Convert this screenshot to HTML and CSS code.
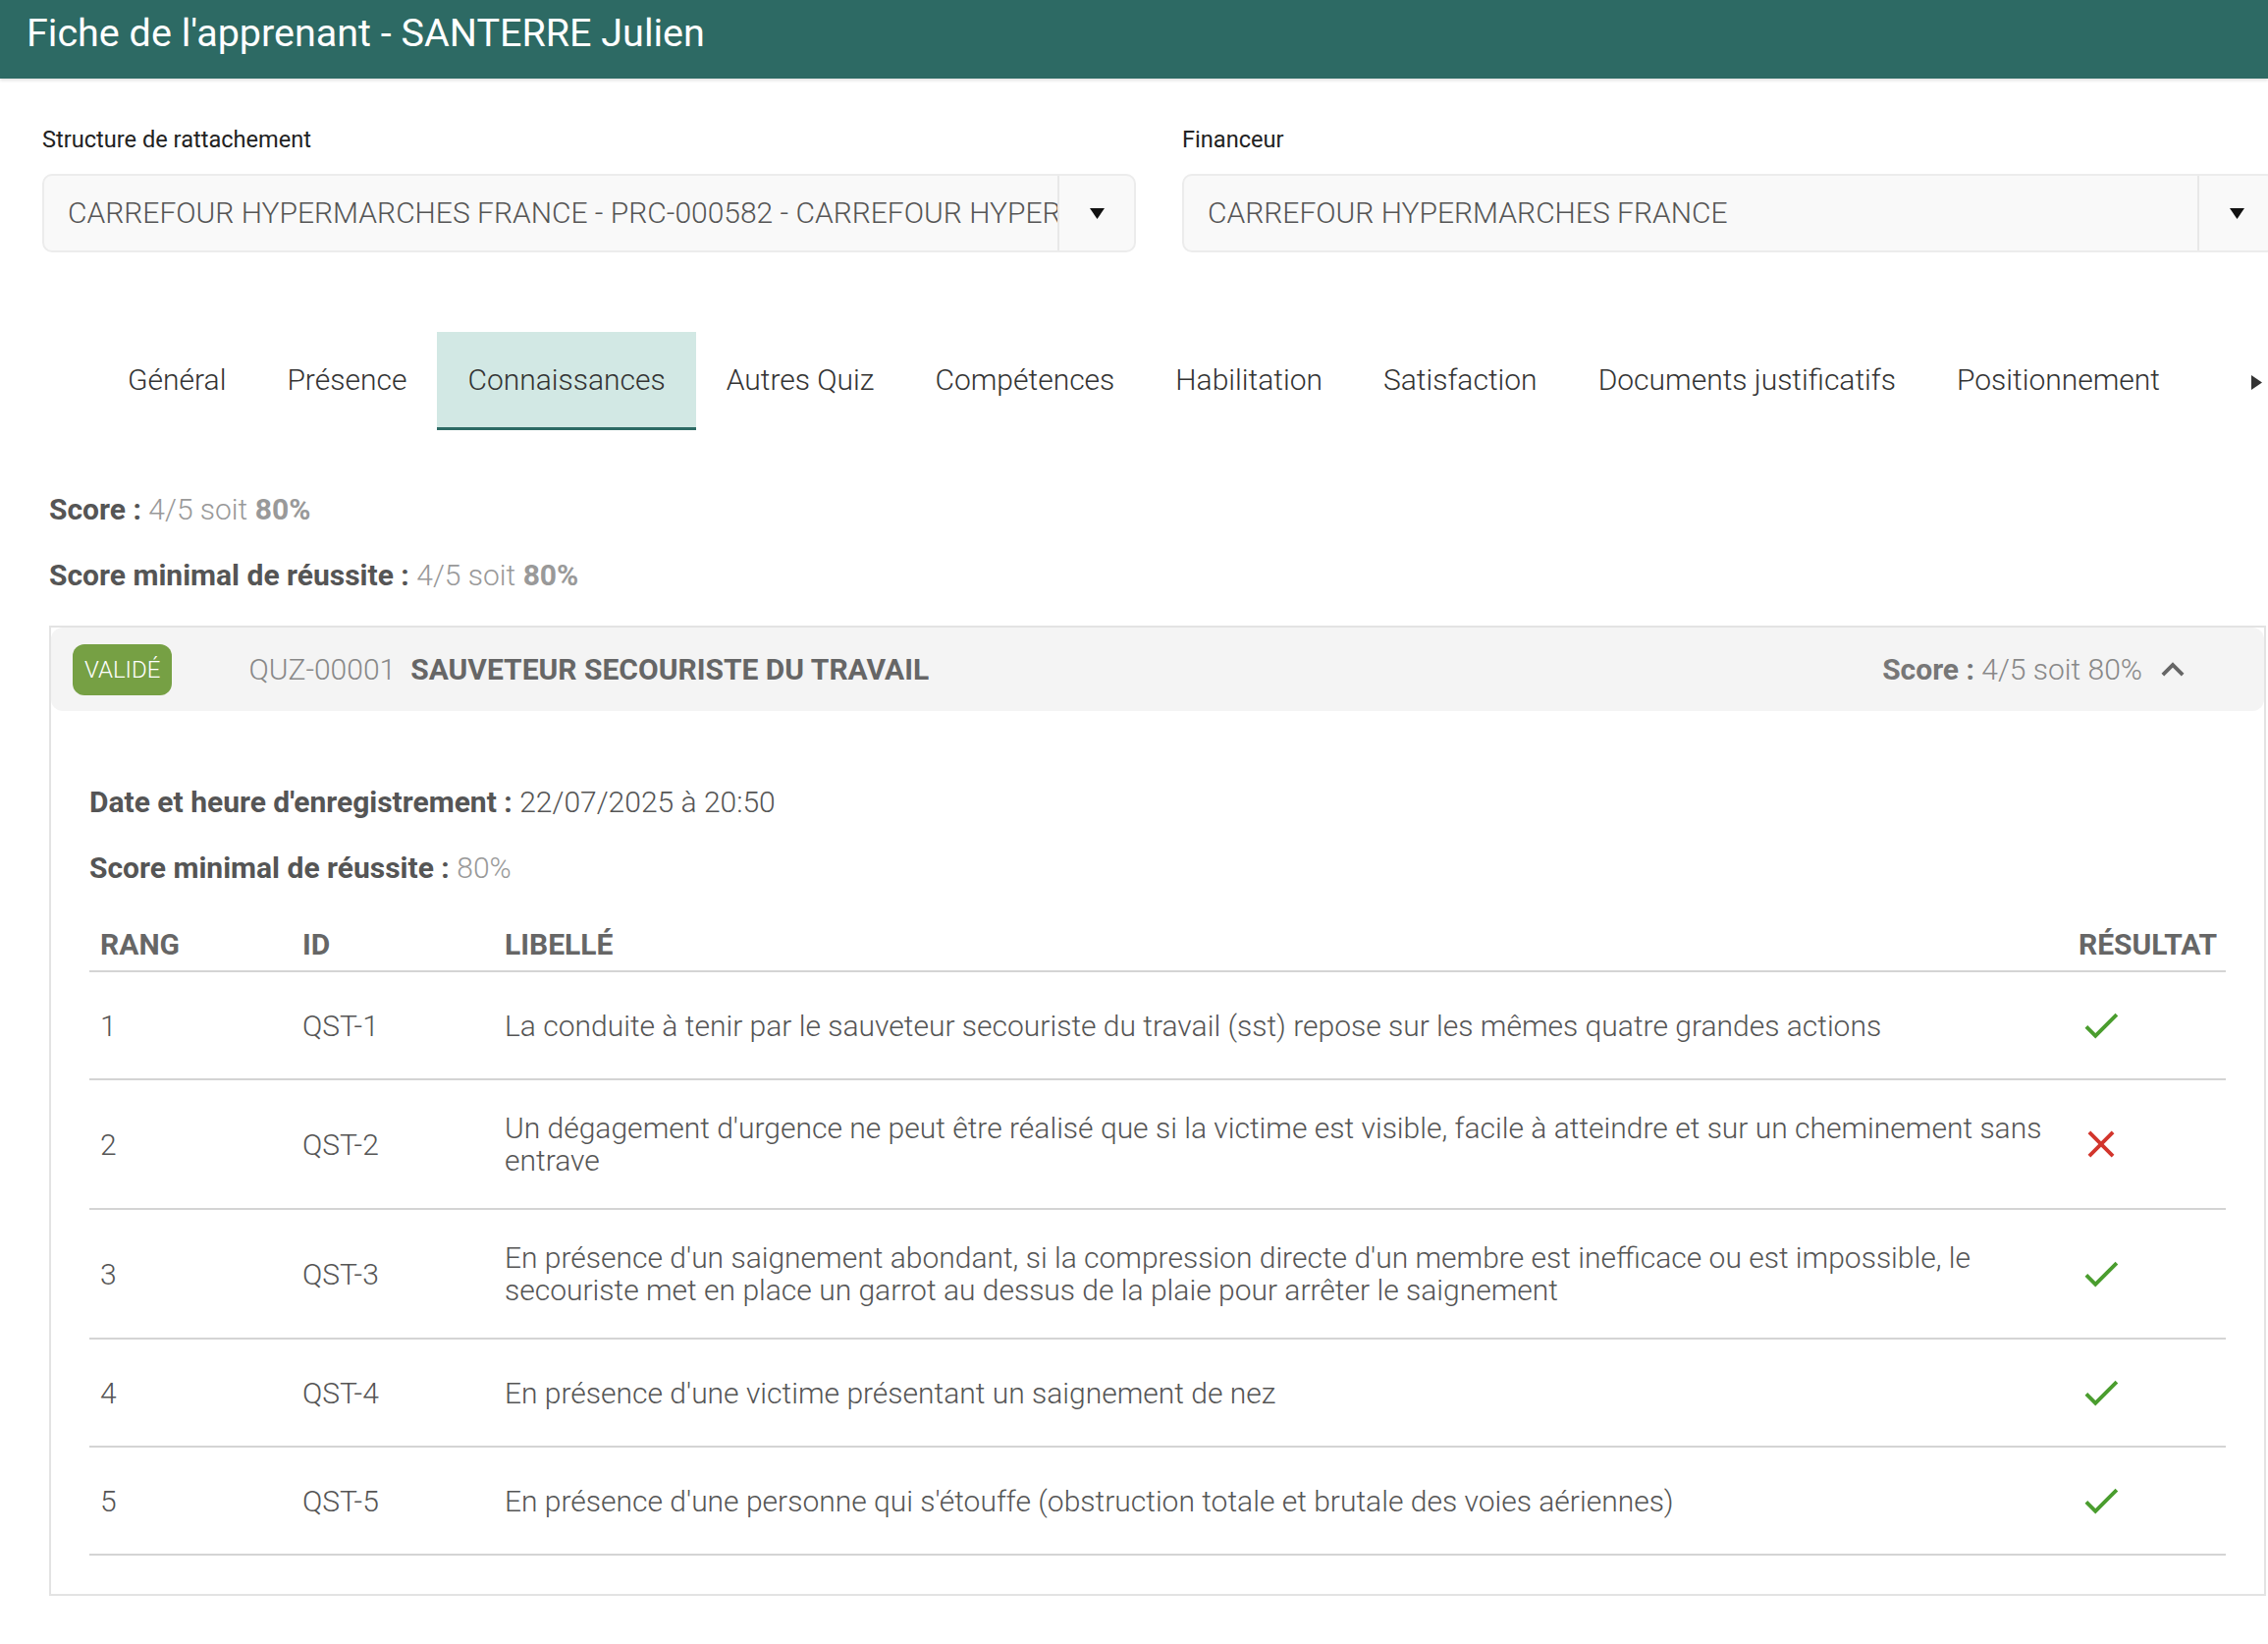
FILE: index.html
```html
<!DOCTYPE html>
<html lang="fr">
<head>
<meta charset="utf-8">
<title>Fiche de l'apprenant</title>
<link rel="stylesheet" href="styles.css">
</head>
<body>
<header class="topbar">
  <h1 class="topbar-title">Fiche de l'apprenant - SANTERRE Julien</h1>
</header>
<main class="page">
  <div class="fields">
    <div class="field">
      <label class="field-label">Structure de rattachement</label>
      <div class="select">
        <span class="select-value">CARREFOUR HYPERMARCHES FRANCE - PRC-000582 - CARREFOUR HYPERMARCHES FRANCE</span>
        <span class="select-arrow"><svg width="15" height="11" viewBox="0 0 15 11"><polygon points="0,0 15,0 7.5,11" fill="#111"/></svg></span>
      </div>
    </div>
    <div class="field">
      <label class="field-label">Financeur</label>
      <div class="select">
        <span class="select-value">CARREFOUR HYPERMARCHES FRANCE</span>
        <span class="select-arrow"><svg width="15" height="11" viewBox="0 0 15 11"><polygon points="0,0 15,0 7.5,11" fill="#111"/></svg></span>
      </div>
    </div>
  </div>

  <nav class="tabs">
    <span class="tabs-spacer"></span>
    <ul class="tab-list">
      <li class="tab">Général</li>
      <li class="tab">Présence</li>
      <li class="tab tab-active">Connaissances</li>
      <li class="tab">Autres Quiz</li>
      <li class="tab">Compétences</li>
      <li class="tab">Habilitation</li>
      <li class="tab">Satisfaction</li>
      <li class="tab">Documents justificatifs</li>
      <li class="tab">Positionnement</li>
    </ul>
    <span class="tabs-next"><svg width="11" height="15" viewBox="0 0 11 15"><polygon points="0,0 11,7.5 0,15" fill="#333"/></svg></span>
  </nav>

  <section class="content">
    <p class="summary-line"><strong>Score :</strong> <span class="muted">4/5 soit</span> <strong class="muted-strong">80%</strong></p>
    <p class="summary-line summary-last"><strong>Score minimal de réussite :</strong> <span class="muted">4/5 soit</span> <strong class="muted-strong">80%</strong></p>

    <div class="quiz-card">
      <div class="quiz-head">
        <span class="badge">VALIDÉ</span>
        <span class="quiz-code">QUZ-00001</span>
        <span class="quiz-title">SAUVETEUR SECOURISTE DU TRAVAIL</span>
        <span class="quiz-score"><strong>Score :</strong> 4/5 soit 80%</span>
        <svg class="chevron" viewBox="0 0 24 24"><path d="M12 8l-6 6 1.41 1.41L12 10.83l4.59 4.58L18 14z" fill="#666"/></svg>
      </div>
      <div class="quiz-body">
        <p class="detail-line"><strong>Date et heure d'enregistrement :</strong> <span class="value">22/07/2025 à 20:50</span></p>
        <p class="detail-line detail-last"><strong>Score minimal de réussite :</strong> <span class="value-muted">80%</span></p>

        <table class="questions">
          <colgroup>
            <col class="col-rang">
            <col class="col-id">
            <col>
            <col class="col-result">
          </colgroup>
          <thead>
            <tr><th>Rang</th><th>ID</th><th>Libellé</th><th>Résultat</th></tr>
          </thead>
          <tbody>
            <tr>
              <td>1</td><td>QST-1</td>
              <td>La conduite à tenir par le sauveteur secouriste du travail (sst) repose sur les mêmes quatre grandes actions</td>
              <td><svg class="result-icon ok" viewBox="0 0 24 24"><path d="M9 16.17L4.83 12l-1.42 1.41L9 19 21 7l-1.41-1.41z"/></svg></td>
            </tr>
            <tr>
              <td>2</td><td>QST-2</td>
              <td>Un dégagement d'urgence ne peut être réalisé que si la victime est visible, facile à atteindre et sur un cheminement sans entrave</td>
              <td><svg class="result-icon ko" viewBox="0 0 24 24"><path d="M19 6.41L17.59 5 12 10.59 6.41 5 5 6.41 10.59 12 5 17.59 6.41 19 12 13.41 17.59 19 19 17.59 13.41 12z"/></svg></td>
            </tr>
            <tr>
              <td>3</td><td>QST-3</td>
              <td>En présence d'un saignement abondant, si la compression directe d'un membre est inefficace ou est impossible, le secouriste met en place un garrot au dessus de la plaie pour arrêter le saignement</td>
              <td><svg class="result-icon ok" viewBox="0 0 24 24"><path d="M9 16.17L4.83 12l-1.42 1.41L9 19 21 7l-1.41-1.41z"/></svg></td>
            </tr>
            <tr>
              <td>4</td><td>QST-4</td>
              <td>En présence d'une victime présentant un saignement de nez</td>
              <td><svg class="result-icon ok" viewBox="0 0 24 24"><path d="M9 16.17L4.83 12l-1.42 1.41L9 19 21 7l-1.41-1.41z"/></svg></td>
            </tr>
            <tr>
              <td>5</td><td>QST-5</td>
              <td>En présence d'une personne qui s'étouffe (obstruction totale et brutale des voies aériennes)</td>
              <td><svg class="result-icon ok" viewBox="0 0 24 24"><path d="M9 16.17L4.83 12l-1.42 1.41L9 19 21 7l-1.41-1.41z"/></svg></td>
            </tr>
          </tbody>
        </table>
      </div>
    </div>
  </section>
</main>
</body>
</html>
```

FILE: styles.css
```css
html, body {
  margin: 0;
  padding: 0;
}
body {
  font-family: Roboto, "Liberation Sans", sans-serif;
  background: #fff;
  color: #444;
  overflow: hidden;
}

/* Top bar */
.topbar {
  height: 80px;
  box-sizing: border-box;
  padding: 11px 27px 0;
  background: #2d6a64;
  box-shadow: 0 2px 3px rgba(0, 0, 0, 0.12);
}
.topbar-title {
  margin: 0;
  font-size: 39.5px;
  font-weight: 400;
  line-height: 46px;
  color: #fff;
}

/* Page */
.page {
  padding: 48px 0 0 43px;
}

/* Fields */
.fields {
  display: grid;
  grid-template-columns: 1114px 1114px;
  column-gap: 47px;
}
.field-label {
  display: block;
  font-size: 23.6px;
  line-height: 28px;
  color: #222;
  margin-bottom: 21px;
}
.select {
  display: flex;
  height: 80px;
  box-sizing: border-box;
  border: 2px solid #ececec;
  border-radius: 10px;
  background: #f9f9f9;
}
.select-value {
  flex: 1;
  min-width: 0;
  overflow: hidden;
  white-space: nowrap;
  padding-left: 24px;
  font-size: 30px;
  font-weight: 300;
  line-height: 76px;
  color: #555;
}
.select-arrow {
  flex: none;
  width: 78px;
  box-sizing: border-box;
  border-left: 2px solid #e8e8e8;
  display: flex;
  align-items: center;
  justify-content: center;
}

/* Tabs */
.tabs {
  display: flex;
  align-items: stretch;
  height: 100px;
  margin-top: 81px;
}
.tabs-spacer {
  flex: none;
  width: 56px;
}
.tab-list {
  display: flex;
  flex: 1;
  min-width: 0;
  overflow: hidden;
  list-style: none;
  margin: 0;
  padding: 0;
}
.tab {
  padding: 0 31px;
  font-size: 30px;
  font-weight: 300;
  line-height: 97px;
  color: #333;
  white-space: nowrap;
  border-bottom: 3px solid transparent;
}
.tab-active {
  background: #d2e8e4;
  border-bottom-color: #2d6a64;
}
.tabs-next {
  flex: none;
  display: flex;
  align-items: center;
  padding-right: 6px;
  padding-top: 2px;
}

/* Content */
.content {
  margin: 64px 2px 0 7px;
}
.summary-line {
  margin: 0 0 33px;
  font-size: 30px;
  line-height: 34px;
  color: #555;
}
.summary-line strong {
  font-weight: 700;
}
.summary-last {
  margin-bottom: 34px;
}
.muted {
  color: #999;
  font-weight: 300;
}
.summary-line .muted-strong {
  color: #999;
  font-weight: 700;
}

/* Quiz card */
.quiz-card {
  border: 2px solid #e3e3e3;
}
.quiz-head {
  display: flex;
  align-items: center;
  height: 85px;
  padding: 0 70px 0 22px;
  background: #f4f4f4;
  border-radius: 12px;
}
.badge {
  display: flex;
  align-items: center;
  height: 52px;
  padding: 0 12px;
  border-radius: 12px;
  background: #76a044;
  color: #fff;
  font-size: 24px;
  font-weight: 300;
  margin-right: 78px;
}
.quiz-code {
  font-size: 30px;
  font-weight: 300;
  color: #888;
  margin-right: 15px;
}
.quiz-title {
  font-size: 30px;
  font-weight: 700;
  color: #666;
}
.quiz-score {
  margin-left: auto;
  font-size: 30px;
  font-weight: 300;
  color: #888;
}
.quiz-score strong {
  font-weight: 700;
  color: #777;
}
.chevron {
  width: 46px;
  height: 46px;
  margin-left: 8px;
}

.quiz-body {
  padding: 76px 39px 39px;
}
.detail-line {
  margin: 0 0 33px;
  font-size: 30px;
  line-height: 34px;
  color: #555;
}
.detail-line strong {
  font-weight: 700;
}
.detail-last {
  margin-bottom: 24px;
}
.value {
  font-weight: 300;
  color: #555;
}
.value-muted {
  font-weight: 300;
  color: #999;
}

/* Table */
.questions {
  width: 100%;
  table-layout: fixed;
  border-collapse: collapse;
}
.col-rang, .col-id {
  width: 206px;
}
.col-result {
  width: 161px;
}
.questions th {
  text-align: left;
  text-transform: uppercase;
  font-size: 30px;
  font-weight: 700;
  line-height: 34px;
  color: #666;
  padding: 20px 11px 9px;
  border-bottom: 2px solid #d4d4d4;
}
.questions td {
  padding: 32px 11px;
  font-size: 30px;
  font-weight: 300;
  line-height: 33px;
  color: #555;
  vertical-align: middle;
  border-bottom: 2px solid #d4d4d4;
}
.result-icon {
  display: block;
  width: 46px;
  height: 46px;
  margin: -1px 0;
}
.result-icon.ok {
  fill: #4a9d2e;
}
.result-icon.ko {
  fill: #d2352c;
}
```
